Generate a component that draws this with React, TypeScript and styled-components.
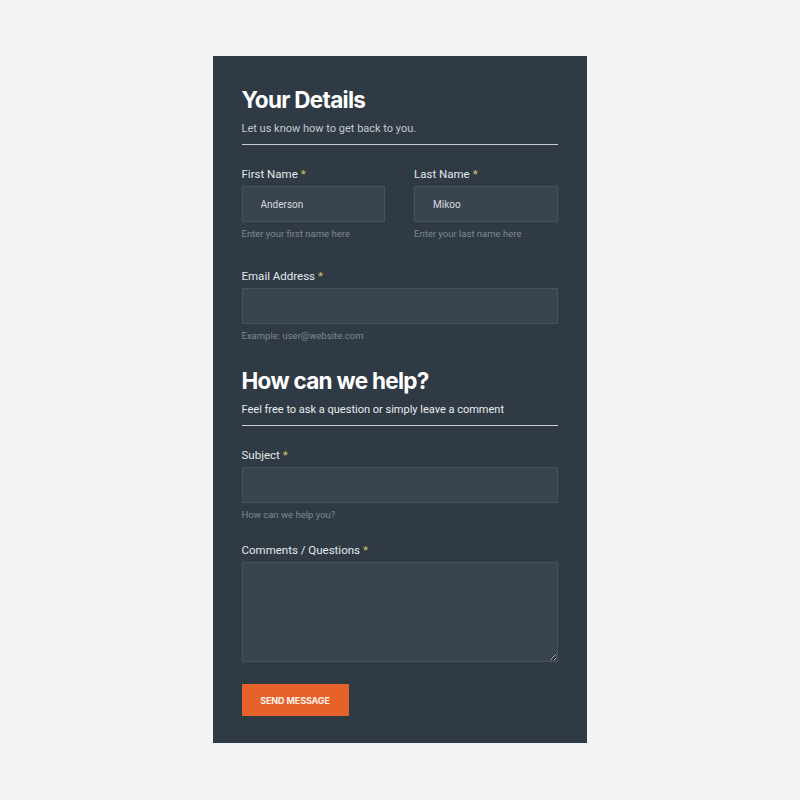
import React from 'react';
import styled, { createGlobalStyle } from 'styled-components';

const GlobalStyle = createGlobalStyle`
  body {
    margin: 0;
    background: #f3f3f3;
    font-family: Roboto, "Liberation Sans", sans-serif;
  }
`;

const Page = styled.div`
  min-height: 800px;
  display: flex;
  justify-content: center;
  align-items: flex-start;
  padding: 56px 1px 0 0;
  box-sizing: border-box;
`;

const Card = styled.form`
  width: 374px;
  box-sizing: border-box;
  background: #2f3a45;
  padding: 30px 29px 27px 29px;
  display: flex;
  flex-direction: column;
`;

const SectionHead = styled.div<{ $top?: number }>`
  margin-top: ${p => p.$top ?? 0}px;
  border-bottom: 1px solid #c9ced3;
  padding-bottom: 8px;
`;

const Title = styled.h2`
  margin: 0;
  font-family: Inter, "Noto Sans", sans-serif;
  font-weight: 700;
  font-size: 22.5px;
  line-height: 28px;
  letter-spacing: -0.7px;
  color: #ffffff;
`;

const Subtitle = styled.p<{ $light?: boolean }>`
  margin: 8px 0 0;
  font-size: 11px;
  line-height: 14px;
  color: ${p => (p.$light ? '#e9ecef' : '#c3c9cf')};
`;

const Row = styled.div`
  display: grid;
  grid-template-columns: 1fr 1fr;
  column-gap: 29px;
`;

const Field = styled.div<{ $top: number }>`
  margin-top: ${p => p.$top}px;
  display: flex;
  flex-direction: column;
`;

const Label = styled.label`
  font-size: 11.5px;
  line-height: 16px;
  color: #e4e8eb;
  margin-bottom: 4px;
`;

const Star = styled.span`
  color: #d8c668;
  margin-left: 3px;
`;

const Input = styled.input`
  height: 36px;
  box-sizing: border-box;
  width: 100%;
  background: #39444e;
  border: 1px solid #46535d;
  padding: 0 18px;
  font-family: Roboto, "Liberation Sans", sans-serif;
  font-size: 10px;
  color: #d6dbe0;
  outline: none;
`;

const TextArea = styled.textarea`
  height: 100px;
  box-sizing: border-box;
  width: 100%;
  background: #39444e;
  border: 1px solid #46535d;
  resize: vertical;
  outline: none;
  display: block;
`;

const Help = styled.span`
  margin-top: 5px;
  font-size: 9.5px;
  line-height: 14px;
  color: #7e8993;
`;

const SendButton = styled.button`
  margin-top: 22px;
  align-self: flex-start;
  width: 107px;
  height: 32px;
  border: none;
  background: #e5622a;
  color: #fdf1ea;
  font-family: Inter, "Noto Sans", sans-serif;
  font-weight: 700;
  font-size: 9px;
  letter-spacing: -0.1px;
  cursor: pointer;
`;

const Required = ({ children }: { children: React.ReactNode }) => (
  <Label>
    {children}
    <Star>*</Star>
  </Label>
);

const App = () => {
  return (
    <Page>
      <GlobalStyle />
      <Card onSubmit={e => e.preventDefault()}>
        <SectionHead>
          <Title>Your Details</Title>
          <Subtitle>Let us know how to get back to you.</Subtitle>
        </SectionHead>

        <Row>
          <Field $top={21}>
            <Required>First Name</Required>
            <Input defaultValue="Anderson" />
            <Help>Enter your first name here</Help>
          </Field>
          <Field $top={21}>
            <Required>Last Name</Required>
            <Input defaultValue="Mikoo" />
            <Help>Enter your last name here</Help>
          </Field>
        </Row>

        <Field $top={27}>
          <Required>Email Address</Required>
          <Input type="email" />
          <Help>Example: user@website.com</Help>
        </Field>

        <SectionHead $top={24}>
          <Title>How can we help?</Title>
          <Subtitle $light>Feel free to ask a question or simply leave a comment</Subtitle>
        </SectionHead>

        <Field $top={21}>
          <Required>Subject</Required>
          <Input />
          <Help>How can we help you?</Help>
        </Field>

        <Field $top={20}>
          <Required>Comments / Questions</Required>
          <TextArea />
        </Field>

        <SendButton type="submit">SEND MESSAGE</SendButton>
      </Card>
    </Page>
  );
};

export default App;
